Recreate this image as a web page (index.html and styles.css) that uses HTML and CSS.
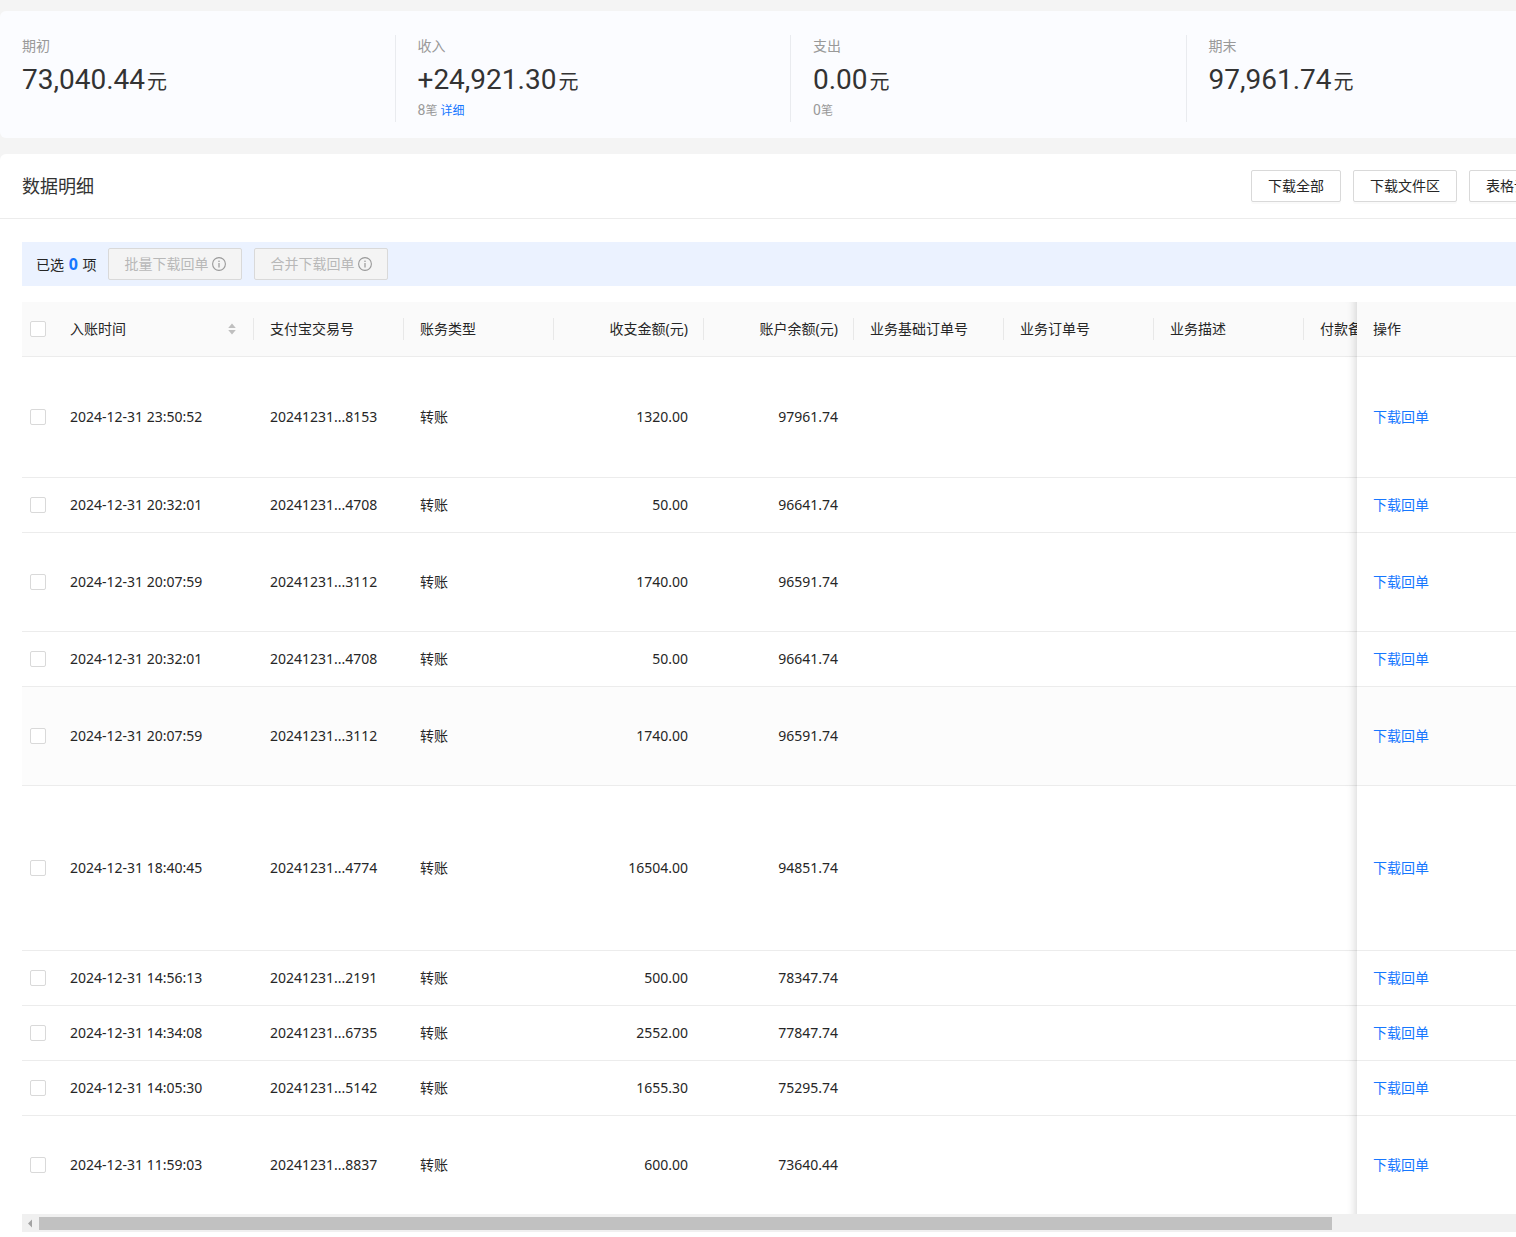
FILE: index.html
```html
<!DOCTYPE html>
<html lang="zh-CN">
<head>
<meta charset="utf-8">
<title>数据明细</title>
<link rel="stylesheet" href="styles.css">
</head>
<body>
<div class="page">
  <section class="summary">
    <div class="stat">
      <div class="stat-label">期初</div>
      <div class="stat-value">73,040.44<span class="unit">元</span></div>
    </div>
    <div class="stat">
      <div class="stat-label">收入</div>
      <div class="stat-value">+24,921.30<span class="unit">元</span></div>
      <div class="stat-note"><span class="count">8</span>笔 <a href="#detail">详细</a></div>
    </div>
    <div class="stat">
      <div class="stat-label">支出</div>
      <div class="stat-value">0.00<span class="unit">元</span></div>
      <div class="stat-note"><span class="count">0</span>笔</div>
    </div>
    <div class="stat">
      <div class="stat-label">期末</div>
      <div class="stat-value">97,961.74<span class="unit">元</span></div>
    </div>
  </section>

  <section class="card" id="detail">
    <header class="card-head">
      <h2>数据明细</h2>
      <div class="actions">
        <button class="btn" type="button">下载全部</button>
        <button class="btn" type="button">下载文件区</button>
        <button class="btn" type="button">表格设置</button>
      </div>
    </header>
    <div class="card-body">
      <div class="selection">
        <span class="selected">已选 <b>0</b> 项</span>
        <button class="btn" type="button" disabled>批量下载回单
          <svg class="info" viewBox="0 0 14 14" width="14" height="14" aria-hidden="true"><circle cx="7" cy="7" r="6.4" fill="none" stroke="currentColor" stroke-width="1.1"/><rect x="6.4" y="6" width="1.2" height="4.5" fill="currentColor"/><circle cx="7" cy="4.2" r=".8" fill="currentColor"/></svg>
        </button>
        <button class="btn" type="button" disabled>合并下载回单
          <svg class="info" viewBox="0 0 14 14" width="14" height="14" aria-hidden="true"><circle cx="7" cy="7" r="6.4" fill="none" stroke="currentColor" stroke-width="1.1"/><rect x="6.4" y="6" width="1.2" height="4.5" fill="currentColor"/><circle cx="7" cy="4.2" r=".8" fill="currentColor"/></svg>
        </button>
      </div>
      <div class="table-scroll">
        <table>
          <colgroup>
            <col class="col-check"><col class="col-time"><col span="9" class="col-data"><col class="col-action">
          </colgroup>
          <thead>
            <tr>
              <th class="check"><input type="checkbox" aria-label="全选"></th>
              <th class="sep"><div class="sortable">入账时间
                <svg viewBox="0 0 8 12" width="8" height="12" aria-hidden="true"><path d="M4 .5 7.8 5H.2zM4 11.5.2 7h7.6z" fill="#bfbfbf"/></svg></div></th>
              <th class="sep">支付宝交易号</th>
              <th class="sep">账务类型</th>
              <th class="sep num">收支金额(元)</th>
              <th class="sep num">账户余额(元)</th>
              <th class="sep">业务基础订单号</th>
              <th class="sep">业务订单号</th>
              <th class="sep">业务描述</th>
              <th class="sep">付款备注</th>
              <th></th>
              <th class="fixed">操作</th>
            </tr>
          </thead>
          <tbody>
            <tr class="lines-4"><td class="check"><input type="checkbox" aria-label="选择此行"></td><td>2024-12-31 23:50:52</td><td>20241231...8153</td><td>转账</td><td class="num">1320.00</td><td class="num">97961.74</td><td></td><td></td><td></td><td></td><td></td><td class="fixed"><a href="#r1">下载回单</a></td></tr>
            <tr><td class="check"><input type="checkbox" aria-label="选择此行"></td><td>2024-12-31 20:32:01</td><td>20241231...4708</td><td>转账</td><td class="num">50.00</td><td class="num">96641.74</td><td></td><td></td><td></td><td></td><td></td><td class="fixed"><a href="#r2">下载回单</a></td></tr>
            <tr class="lines-3"><td class="check"><input type="checkbox" aria-label="选择此行"></td><td>2024-12-31 20:07:59</td><td>20241231...3112</td><td>转账</td><td class="num">1740.00</td><td class="num">96591.74</td><td></td><td></td><td></td><td></td><td></td><td class="fixed"><a href="#r3">下载回单</a></td></tr>
            <tr><td class="check"><input type="checkbox" aria-label="选择此行"></td><td>2024-12-31 20:32:01</td><td>20241231...4708</td><td>转账</td><td class="num">50.00</td><td class="num">96641.74</td><td></td><td></td><td></td><td></td><td></td><td class="fixed"><a href="#r4">下载回单</a></td></tr>
            <tr class="lines-3 active"><td class="check"><input type="checkbox" aria-label="选择此行"></td><td>2024-12-31 20:07:59</td><td>20241231...3112</td><td>转账</td><td class="num">1740.00</td><td class="num">96591.74</td><td></td><td></td><td></td><td></td><td></td><td class="fixed"><a href="#r5">下载回单</a></td></tr>
            <tr class="lines-6"><td class="check"><input type="checkbox" aria-label="选择此行"></td><td>2024-12-31 18:40:45</td><td>20241231...4774</td><td>转账</td><td class="num">16504.00</td><td class="num">94851.74</td><td></td><td></td><td></td><td></td><td></td><td class="fixed"><a href="#r6">下载回单</a></td></tr>
            <tr><td class="check"><input type="checkbox" aria-label="选择此行"></td><td>2024-12-31 14:56:13</td><td>20241231...2191</td><td>转账</td><td class="num">500.00</td><td class="num">78347.74</td><td></td><td></td><td></td><td></td><td></td><td class="fixed"><a href="#r7">下载回单</a></td></tr>
            <tr><td class="check"><input type="checkbox" aria-label="选择此行"></td><td>2024-12-31 14:34:08</td><td>20241231...6735</td><td>转账</td><td class="num">2552.00</td><td class="num">77847.74</td><td></td><td></td><td></td><td></td><td></td><td class="fixed"><a href="#r8">下载回单</a></td></tr>
            <tr><td class="check"><input type="checkbox" aria-label="选择此行"></td><td>2024-12-31 14:05:30</td><td>20241231...5142</td><td>转账</td><td class="num">1655.30</td><td class="num">75295.74</td><td></td><td></td><td></td><td></td><td></td><td class="fixed"><a href="#r9">下载回单</a></td></tr>
            <tr class="lines-3"><td class="check"><input type="checkbox" aria-label="选择此行"></td><td>2024-12-31 11:59:03</td><td>20241231...8837</td><td>转账</td><td class="num">600.00</td><td class="num">73640.44</td><td></td><td></td><td></td><td></td><td></td><td class="fixed"><a href="#r10">下载回单</a></td></tr>
          </tbody>
        </table>
      </div>
      <div class="scrollbar" aria-hidden="true">
        <svg viewBox="0 0 17 18" width="17" height="18"><path d="M6 9.5 10 5.5v8z" fill="#a3a3a3"/></svg>
        <div class="track"><div class="thumb"></div></div>
        <svg viewBox="0 0 17 18" width="17" height="18"><path d="M11 9.5 7 5.5v8z" fill="#505050"/></svg>
      </div>
    </div>
  </section>
</div>
</body>
</html>
```
FILE: styles.css
```css
* { box-sizing: border-box; }

body {
  margin: 0;
  overflow-x: hidden;
  background: #f4f4f4;
  color: #262626;
  font: 14px/22px "Noto Sans", "Noto Sans CJK SC", sans-serif;
}

a { color: #1677ff; text-decoration: none; }

.page {
  display: flex;
  flex-direction: column;
  gap: 16px;
  min-width: 1582px;
  min-height: 100vh;
  padding-top: 11px;
}

/* Balance summary */
.summary {
  display: grid;
  grid-template-columns: repeat(4, 1fr);
  padding: 24px 0 16px;
  border-radius: 6px;
  background: #fbfcff;
}

.stat {
  min-height: 87px;
  padding-left: 22px;
  border-right: 1px solid #e9ebef;
}

.stat:last-child { border-right: 0; }
.stat-label { margin-bottom: 2px; color: #999; }

.stat-value {
  height: 42px;
  color: #333;
  font-family: Roboto, "Noto Sans CJK SC", sans-serif;
  font-size: 28px;
  line-height: 42px;
}

.unit { margin-left: 2px; font-size: 20px; }

.stat-note {
  color: #999;
  font-size: 12px;
  line-height: 20px;
}

.count { font-family: Roboto, sans-serif; font-size: 14px; line-height: 1; }

/* Detail card */
.card {
  flex: 1;
  border-radius: 6px 6px 0 0;
  background: #fff;
}

.card-head {
  display: flex;
  align-items: center;
  justify-content: space-between;
  height: 65px;
  padding: 0 23px 0 22px;
  border-bottom: 1px solid #ececec;
}

h2 {
  margin: 0;
  color: #333;
  font-size: 18px;
  font-weight: 400;
}

.actions { display: flex; gap: 12px; }

.btn {
  display: flex;
  align-items: center;
  gap: 4px;
  height: 32px;
  padding: 0 16px;
  border: 1px solid #d9d9d9;
  border-radius: 2px;
  background: #fff;
  box-shadow: 0 2px 0 rgba(0, 0, 0, .02);
  color: #262626;
  font: inherit;
}

.btn:disabled {
  padding: 0 15px;
  background: #f4f4f4;
  box-shadow: none;
  color: #b8b8b8;
}

.info { color: #999; }

.card-body { padding: 23px 23px 4px 22px; }

.selection {
  display: flex;
  align-items: center;
  gap: 12px;
  height: 44px;
  margin-bottom: 16px;
  padding-left: 14px;
  background: #ebf2ff;
}

.selected b { margin: 0 1px; color: #1677ff; font-size: 16px; }

/* Records table */
.table-scroll { overflow-x: auto; scrollbar-width: none; }

table {
  width: 1784px;
  border-collapse: separate;
  border-spacing: 0;
  table-layout: fixed;
}

.col-check { width: 32px; }
.col-time { width: 200px; }
.col-data { width: 150px; }
.col-action { width: 202px; }

th, td {
  position: relative;
  height: 55px;
  padding: 0 16px;
  border-bottom: 1px solid #ececec;
  background: #fff;
  font-weight: 400;
  text-align: left;
  white-space: nowrap;
}

th { background: #fafafa; }
.lines-3 td { height: 99px; }
.lines-4 td { height: 121px; }
.lines-6 td { height: 165px; }
.active td { background: #fcfcfc; }
tbody tr:last-child td { border-bottom: 0; height: 98px; }
.num { text-align: right; }
.check { padding: 0 8px; }

.sep::after {
  content: "";
  position: absolute;
  top: 16px;
  right: 0;
  width: 1px;
  height: 22px;
  background: #e8e8e8;
}

.sortable {
  display: flex;
  align-items: center;
  justify-content: space-between;
  padding-right: 2px;
}

input[type="checkbox"] {
  appearance: none;
  display: block;
  width: 16px;
  height: 16px;
  margin: 0;
  border: 1px solid #d9d9d9;
  border-radius: 2px;
  background: #fff;
}

.fixed { position: sticky; right: 0; z-index: 1; }

.fixed::before {
  content: "";
  position: absolute;
  top: 0;
  bottom: -1px;
  right: 100%;
  width: 30px;
  box-shadow: inset -10px 0 8px -8px rgba(0, 0, 0, .15);
}

.scrollbar {
  display: flex;
  height: 18px;
  background: #f0f0f0;
}

.track { flex: 1; padding: 3px 0 2px; }
.thumb { width: 86%; height: 100%; background: #c1c1c1; }
```
